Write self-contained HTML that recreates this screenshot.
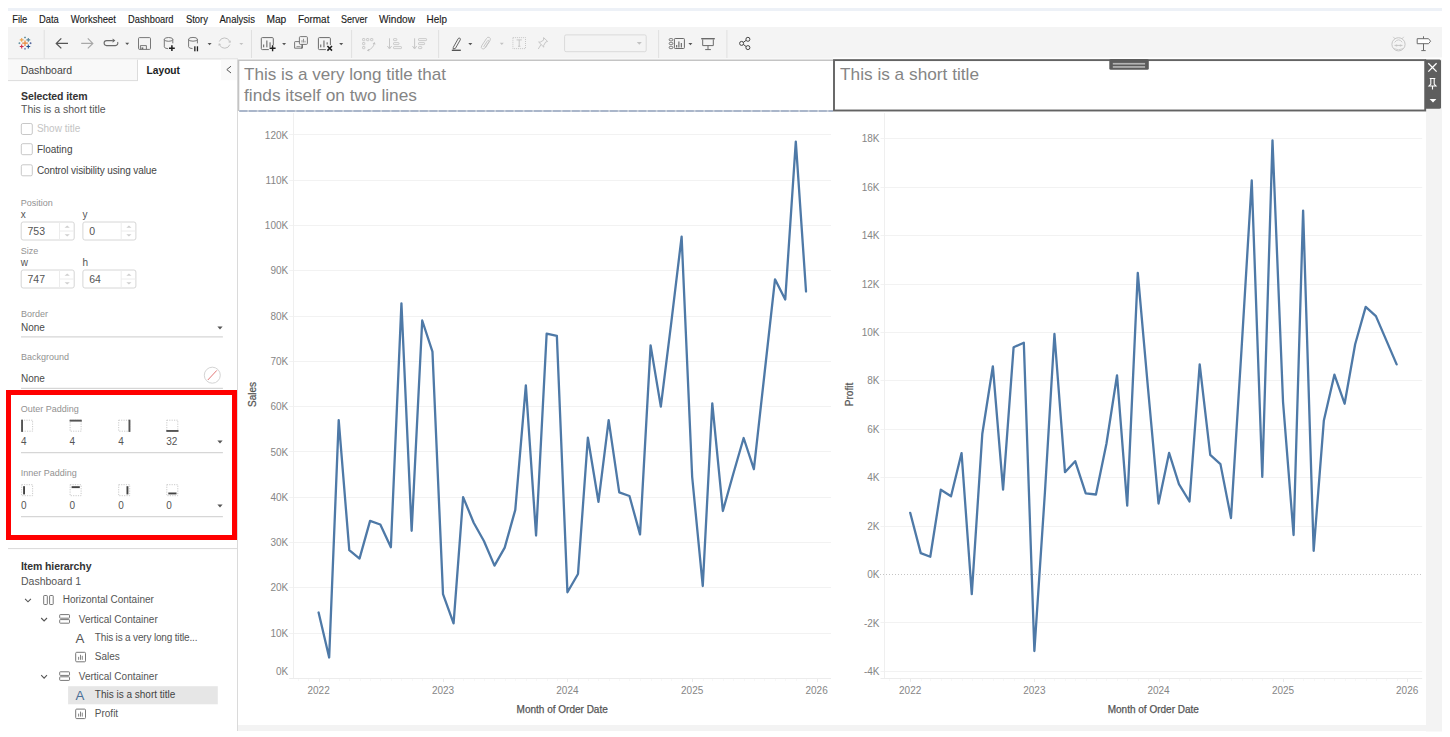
<!DOCTYPE html>
<html><head><meta charset="utf-8"><style>
html,body{margin:0;padding:0;background:#fff;overflow:hidden}
svg{display:block;font-family:"Liberation Sans",sans-serif}
</style></head><body>
<svg width="1450" height="737" viewBox="0 0 1450 737">
<rect x="0" y="0" width="1450" height="737" fill="#ffffff" />
<rect x="8" y="8" width="1434" height="3" fill="#edf1f7" />
<rect x="8" y="27" width="1434" height="31.2" fill="#f4f4f4" />
<rect x="8" y="58.2" width="230" height="1.5" fill="#e0e0e0" />
<rect x="238" y="58.2" width="595" height="1.3" fill="#f7f7f7" />
<text x="12.200000000000001" y="23.2" font-size="10.2" fill="#1a1a1a" font-weight="normal" text-anchor="start" textLength="15.1" lengthAdjust="spacingAndGlyphs" stroke="#1a1a1a" stroke-width="0.12">File</text>
<text x="39.0" y="23.2" font-size="10.2" fill="#1a1a1a" font-weight="normal" text-anchor="start" textLength="19.8" lengthAdjust="spacingAndGlyphs" stroke="#1a1a1a" stroke-width="0.12">Data</text>
<text x="70.8" y="23.2" font-size="10.2" fill="#1a1a1a" font-weight="normal" text-anchor="start" textLength="45.1" lengthAdjust="spacingAndGlyphs" stroke="#1a1a1a" stroke-width="0.12">Worksheet</text>
<text x="128.10000000000002" y="23.2" font-size="10.2" fill="#1a1a1a" font-weight="normal" text-anchor="start" textLength="45.4" lengthAdjust="spacingAndGlyphs" stroke="#1a1a1a" stroke-width="0.12">Dashboard</text>
<text x="185.9" y="23.2" font-size="10.2" fill="#1a1a1a" font-weight="normal" text-anchor="start" textLength="22.1" lengthAdjust="spacingAndGlyphs" stroke="#1a1a1a" stroke-width="0.12">Story</text>
<text x="219.5" y="23.2" font-size="10.2" fill="#1a1a1a" font-weight="normal" text-anchor="start" textLength="35.4" lengthAdjust="spacingAndGlyphs" stroke="#1a1a1a" stroke-width="0.12">Analysis</text>
<text x="266.40000000000003" y="23.2" font-size="10.2" fill="#1a1a1a" font-weight="normal" text-anchor="start" textLength="19.9" lengthAdjust="spacingAndGlyphs" stroke="#1a1a1a" stroke-width="0.12">Map</text>
<text x="297.90000000000003" y="23.2" font-size="10.2" fill="#1a1a1a" font-weight="normal" text-anchor="start" textLength="31.5" lengthAdjust="spacingAndGlyphs" stroke="#1a1a1a" stroke-width="0.12">Format</text>
<text x="340.90000000000003" y="23.2" font-size="10.2" fill="#1a1a1a" font-weight="normal" text-anchor="start" textLength="26.5" lengthAdjust="spacingAndGlyphs" stroke="#1a1a1a" stroke-width="0.12">Server</text>
<text x="379.0" y="23.2" font-size="10.2" fill="#1a1a1a" font-weight="normal" text-anchor="start" textLength="36.0" lengthAdjust="spacingAndGlyphs" stroke="#1a1a1a" stroke-width="0.12">Window</text>
<text x="426.5" y="23.2" font-size="10.2" fill="#1a1a1a" font-weight="normal" text-anchor="start" textLength="20.4" lengthAdjust="spacingAndGlyphs" stroke="#1a1a1a" stroke-width="0.12">Help</text>
<rect x="8" y="59.7" width="229" height="671.3" fill="#ffffff" />
<rect x="8" y="59.7" width="130" height="20.5" fill="#f9f9f9" />
<line x1="8" y1="80.6" x2="138" y2="80.6" stroke="#dcdcdc" stroke-width="1" />
<line x1="137.5" y1="59.7" x2="137.5" y2="81" stroke="#dcdcdc" stroke-width="1" />
<rect x="221" y="59.7" width="16" height="20.5" fill="#f9f9f9" />
<text x="20.7" y="74" font-size="10.5" fill="#444" font-weight="normal" text-anchor="start" >Dashboard</text>
<text x="146.6" y="74" font-size="10.2" fill="#222" font-weight="bold" text-anchor="start" >Layout</text>
<path d="M231 66.2 L226.8 69.6 L231 73" fill="none" stroke="#555" stroke-width="1"/>
<line x1="237.5" y1="59.5" x2="237.5" y2="731" stroke="#dadada" stroke-width="1" />
<text x="21" y="99.8" font-size="10.5" fill="#333" font-weight="bold" text-anchor="start" letter-spacing="-0.1">Selected item</text>
<text x="21" y="113.1" font-size="10.5" fill="#555" font-weight="normal" text-anchor="start" >This is a short title</text>
<rect x="21.3" y="123.5" width="11" height="11" rx="1.5" fill="#fff" stroke="#c8c8c8" stroke-width="1"/>
<text x="36.9" y="132" font-size="10" fill="#c4c4c4" font-weight="normal" text-anchor="start" >Show title</text>
<rect x="21.3" y="143.7" width="11" height="11" rx="1.5" fill="#fff" stroke="#c8c8c8" stroke-width="1"/>
<text x="36.9" y="152.9" font-size="10" fill="#444" font-weight="normal" text-anchor="start" >Floating</text>
<rect x="21.3" y="164.8" width="11" height="11" rx="1.5" fill="#fff" stroke="#c8c8c8" stroke-width="1"/>
<text x="36.9" y="173.7" font-size="10" fill="#444" font-weight="normal" text-anchor="start" letter-spacing="-0.1">Control visibility using value</text>
<text x="20.7" y="205.9" font-size="9" fill="#929292" font-weight="normal" text-anchor="start" >Position</text>
<text x="20.7" y="218" font-size="10" fill="#555" font-weight="normal" text-anchor="start" >x</text>
<text x="82.4" y="218" font-size="10" fill="#555" font-weight="normal" text-anchor="start" >y</text>
<rect x="21.2" y="222.0" width="53" height="18" rx="2" fill="#fff" stroke="#d6d6d6"/>
<line x1="59.5" y1="222.5" x2="59.5" y2="239.5" stroke="#ececec" stroke-width="1" />
<line x1="59.5" y1="231.0" x2="73.7" y2="231.0" stroke="#ececec" stroke-width="1" />
<path d="M64.60000000000001 227.7 L67.2 225.4 L69.8 227.7 Z" fill="#cfcfcf"/>
<path d="M64.60000000000001 234.3 L67.2 236.6 L69.8 234.3 Z" fill="#cfcfcf"/>
<text x="27.5" y="234.8" font-size="10.5" fill="#555" font-weight="normal" text-anchor="start" >753</text>
<rect x="82.9" y="222.0" width="53" height="18" rx="2" fill="#fff" stroke="#d6d6d6"/>
<line x1="121.2" y1="222.5" x2="121.2" y2="239.5" stroke="#ececec" stroke-width="1" />
<line x1="121.2" y1="231.0" x2="135.4" y2="231.0" stroke="#ececec" stroke-width="1" />
<path d="M126.30000000000001 227.7 L128.9 225.4 L131.5 227.7 Z" fill="#cfcfcf"/>
<path d="M126.30000000000001 234.3 L128.9 236.6 L131.5 234.3 Z" fill="#cfcfcf"/>
<text x="89.2" y="234.8" font-size="10.5" fill="#555" font-weight="normal" text-anchor="start" >0</text>
<text x="20.7" y="254.3" font-size="9" fill="#929292" font-weight="normal" text-anchor="start" >Size</text>
<text x="20.7" y="265.8" font-size="10" fill="#555" font-weight="normal" text-anchor="start" >w</text>
<text x="82.4" y="265.8" font-size="10" fill="#555" font-weight="normal" text-anchor="start" >h</text>
<rect x="21.2" y="270.0" width="53" height="18" rx="2" fill="#fff" stroke="#d6d6d6"/>
<line x1="59.5" y1="270.5" x2="59.5" y2="287.5" stroke="#ececec" stroke-width="1" />
<line x1="59.5" y1="279.0" x2="73.7" y2="279.0" stroke="#ececec" stroke-width="1" />
<path d="M64.60000000000001 275.7 L67.2 273.4 L69.8 275.7 Z" fill="#cfcfcf"/>
<path d="M64.60000000000001 282.3 L67.2 284.6 L69.8 282.3 Z" fill="#cfcfcf"/>
<text x="27.5" y="282.8" font-size="10.5" fill="#555" font-weight="normal" text-anchor="start" >747</text>
<rect x="82.9" y="270.0" width="53" height="18" rx="2" fill="#fff" stroke="#d6d6d6"/>
<line x1="121.2" y1="270.5" x2="121.2" y2="287.5" stroke="#ececec" stroke-width="1" />
<line x1="121.2" y1="279.0" x2="135.4" y2="279.0" stroke="#ececec" stroke-width="1" />
<path d="M126.30000000000001 275.7 L128.9 273.4 L131.5 275.7 Z" fill="#cfcfcf"/>
<path d="M126.30000000000001 282.3 L128.9 284.6 L131.5 282.3 Z" fill="#cfcfcf"/>
<text x="89.2" y="282.8" font-size="10.5" fill="#555" font-weight="normal" text-anchor="start" >64</text>
<text x="21" y="316.8" font-size="9" fill="#929292" font-weight="normal" text-anchor="start" >Border</text>
<text x="21" y="331.2" font-size="10" fill="#4a4a4a" font-weight="normal" text-anchor="start" >None</text>
<path d="M217.4 326.4 L222.6 326.4 L220 329.6 Z" fill="#555"/>
<line x1="21" y1="336.9" x2="222.9" y2="336.9" stroke="#d6d6d6" stroke-width="1.3" />
<text x="21" y="360.2" font-size="9" fill="#929292" font-weight="normal" text-anchor="start" >Background</text>
<text x="21" y="382" font-size="10" fill="#4a4a4a" font-weight="normal" text-anchor="start" >None</text>
<circle cx="212.3" cy="375.2" r="8" fill="#fff" stroke="#d4d4d4" stroke-width="1"/>
<line x1="207.8" y1="380" x2="216.8" y2="370.4" stroke="#e27777" stroke-width="1" />
<line x1="21" y1="388.4" x2="222.9" y2="388.4" stroke="#d6d6d6" stroke-width="1.3" />
<text x="20.8" y="411.8" font-size="9" fill="#929292" font-weight="normal" text-anchor="start" >Outer Padding</text>
<rect x="21.6" y="420.2" width="11" height="11" fill="none" stroke="#bdbdbd" stroke-width="0.8" stroke-dasharray="1.2 1.2"/>
<rect x="21.1" y="419.7" width="1.9" height="12.2" fill="#555" />
<text x="21.1" y="445" font-size="10" fill="#555" font-weight="normal" text-anchor="start" >4</text>
<rect x="70.1" y="420.2" width="11" height="11" fill="none" stroke="#bdbdbd" stroke-width="0.8" stroke-dasharray="1.2 1.2"/>
<rect x="69.6" y="419.7" width="12.2" height="1.9" fill="#555" />
<text x="69.6" y="445" font-size="10" fill="#555" font-weight="normal" text-anchor="start" >4</text>
<rect x="118.7" y="420.2" width="11" height="11" fill="none" stroke="#bdbdbd" stroke-width="0.8" stroke-dasharray="1.2 1.2"/>
<rect x="128.5" y="419.7" width="1.9" height="12.2" fill="#555" />
<text x="118.2" y="445" font-size="10" fill="#555" font-weight="normal" text-anchor="start" >4</text>
<rect x="166.8" y="420.2" width="11" height="11" fill="none" stroke="#bdbdbd" stroke-width="0.8" stroke-dasharray="1.2 1.2"/>
<rect x="166.3" y="430.0" width="12.2" height="1.9" fill="#555" />
<text x="166.3" y="445" font-size="10" fill="#555" font-weight="normal" text-anchor="start" >32</text>
<path d="M217.4 440.4 L222.6 440.4 L220 443.6 Z" fill="#555"/>
<line x1="21" y1="452.6" x2="222.9" y2="452.6" stroke="#d6d6d6" stroke-width="1.3" />
<text x="20.8" y="475.6" font-size="9" fill="#929292" font-weight="normal" text-anchor="start" >Inner Padding</text>
<rect x="21.6" y="484.7" width="11" height="11" fill="none" stroke="#bdbdbd" stroke-width="0.8" stroke-dasharray="1.2 1.2"/>
<rect x="23.1" y="486.2" width="1.9" height="8.2" fill="#444" />
<text x="21.1" y="509.2" font-size="10" fill="#555" font-weight="normal" text-anchor="start" >0</text>
<rect x="70.1" y="484.7" width="11" height="11" fill="none" stroke="#bdbdbd" stroke-width="0.8" stroke-dasharray="1.2 1.2"/>
<rect x="71.6" y="486.2" width="8.2" height="1.9" fill="#444" />
<text x="69.6" y="509.2" font-size="10" fill="#555" font-weight="normal" text-anchor="start" >0</text>
<rect x="118.7" y="484.7" width="11" height="11" fill="none" stroke="#bdbdbd" stroke-width="0.8" stroke-dasharray="1.2 1.2"/>
<rect x="126.5" y="486.2" width="1.9" height="8.2" fill="#444" />
<text x="118.2" y="509.2" font-size="10" fill="#555" font-weight="normal" text-anchor="start" >0</text>
<rect x="166.8" y="484.7" width="11" height="11" fill="none" stroke="#bdbdbd" stroke-width="0.8" stroke-dasharray="1.2 1.2"/>
<rect x="168.3" y="492.5" width="8.2" height="1.9" fill="#444" />
<text x="166.3" y="509.2" font-size="10" fill="#555" font-weight="normal" text-anchor="start" >0</text>
<path d="M217.4 504.4 L222.6 504.4 L220 507.6 Z" fill="#555"/>
<line x1="21" y1="516.6" x2="222.9" y2="516.6" stroke="#d6d6d6" stroke-width="1.3" />
<rect x="8.5" y="392.5" width="226" height="145" fill="none" stroke="#ff0000" stroke-width="5"/>
<line x1="8" y1="548.6" x2="237" y2="548.6" stroke="#d9d9d9" stroke-width="1" />
<text x="21" y="570.2" font-size="10.5" fill="#333" font-weight="bold" text-anchor="start" letter-spacing="-0.1">Item hierarchy</text>
<text x="21" y="585.2" font-size="10.5" fill="#555" font-weight="normal" text-anchor="start" >Dashboard 1</text>
<path d="M25.1 598.9 L28.0 601.8 L30.900000000000002 598.9" fill="none" stroke="#555" stroke-width="1.1"/>
<rect x="43.7" y="595.5" width="3.6" height="9" rx="0.6" fill="none" stroke="#777" stroke-width="1"/>
<rect x="49.6" y="595.5" width="3.6" height="9" rx="0.6" fill="none" stroke="#777" stroke-width="1"/>
<text x="62.7" y="603.4" font-size="10" fill="#555" font-weight="normal" text-anchor="start" >Horizontal Container</text>
<path d="M41.2 618 L44.1 620.9 L47.0 618" fill="none" stroke="#555" stroke-width="1.1"/>
<rect x="59.7" y="614.6" width="9.8" height="3.6" rx="0.6" fill="none" stroke="#777" stroke-width="1"/>
<rect x="59.7" y="619.6" width="9.8" height="3.6" rx="0.6" fill="none" stroke="#777" stroke-width="1"/>
<text x="78.8" y="622.6" font-size="10" fill="#555" font-weight="normal" text-anchor="start" >Vertical Container</text>
<text x="75.6" y="642.9" font-size="13.3" fill="#555" >A</text>
<text x="94.8" y="640.9" font-size="10" fill="#555" font-weight="normal" text-anchor="start" letter-spacing="-0.17">This is a very long title...</text>
<rect x="75.7" y="652.3" width="9.8" height="9.5" rx="1" fill="none" stroke="#777" stroke-width="1"/>
<rect x="78.2" y="656.8" width="0.9" height="3" fill="#777" />
<rect x="80.0" y="654.8" width="0.9" height="5" fill="#777" />
<rect x="81.8" y="655.8" width="0.9" height="4" fill="#777" />
<text x="94.8" y="660.2" font-size="10" fill="#555" font-weight="normal" text-anchor="start" >Sales</text>
<path d="M41.2 675.2 L44.1 678.1 L47.0 675.2" fill="none" stroke="#555" stroke-width="1.1"/>
<rect x="59.7" y="671.8" width="9.8" height="3.6" rx="0.6" fill="none" stroke="#777" stroke-width="1"/>
<rect x="59.7" y="676.8" width="9.8" height="3.6" rx="0.6" fill="none" stroke="#777" stroke-width="1"/>
<text x="78.8" y="679.8" font-size="10" fill="#555" font-weight="normal" text-anchor="start" >Vertical Container</text>
<rect x="68.1" y="686.2" width="149.7" height="18.1" fill="#e6e6e6" />
<text x="75.6" y="699.8" font-size="13.3" fill="#4a6f96" >A</text>
<text x="94.8" y="698.1" font-size="10" fill="#444" font-weight="normal" text-anchor="start" >This is a short title</text>
<rect x="75.7" y="709.1" width="9.8" height="9.5" rx="1" fill="none" stroke="#777" stroke-width="1"/>
<rect x="78.2" y="713.6" width="0.9" height="3" fill="#777" />
<rect x="80.0" y="711.6" width="0.9" height="5" fill="#777" />
<rect x="81.8" y="712.6" width="0.9" height="4" fill="#777" />
<text x="94.8" y="717.1" font-size="10" fill="#555" font-weight="normal" text-anchor="start" >Profit</text>
<rect x="238" y="59.5" width="1204" height="671.5" fill="#ffffff" />
<rect x="833" y="57.5" width="609" height="2" fill="#ffffff" />
<rect x="1426" y="59.5" width="16" height="672" fill="#f3f3f3" />
<rect x="238" y="725" width="1204" height="6" fill="#f3f3f3" />
<path d="M238.6 111 L238.6 60.3 L833 60.3" fill="none" stroke="#c4c4c4" stroke-width="1.4"/>
<line x1="239" y1="111" x2="833" y2="111" stroke="#bcc4d0" stroke-width="1.6"/>
<line x1="239.5" y1="111" x2="833" y2="111" stroke="#9eadc4" stroke-width="1.6" stroke-dasharray="7.8 1.7"/>
<text x="244" y="80.2" font-size="16.2" fill="#858585" font-weight="normal" text-anchor="start" textLength="202" lengthAdjust="spacingAndGlyphs">This is a very long title that</text>
<text x="244" y="100.9" font-size="16.2" fill="#858585" font-weight="normal" text-anchor="start" textLength="173" lengthAdjust="spacingAndGlyphs">finds itself on two lines</text>
<rect x="834" y="60.1" width="591.2" height="50.4" fill="#fff" stroke="#636363" stroke-width="1.9"/>
<text x="840" y="80.2" font-size="16.2" fill="#858585" font-weight="normal" text-anchor="start" textLength="139" lengthAdjust="spacingAndGlyphs">This is a short title</text>
<rect x="1109.3" y="59" width="39.5" height="10.7" rx="1.5" fill="#5c5c5c"/>
<rect x="1112.8" y="62.9" width="32.3" height="1.7" fill="#b4b4b4" />
<rect x="1112.8" y="66.1" width="32.3" height="1.7" fill="#b4b4b4" />
<path d="M1425.2 59.5 H1439.5 Q1441 59.5 1441 61 V107.2 Q1441 108.7 1439.5 108.7 H1425.2 Z" fill="#5e5e5e"/>
<path d="M1428.3 63.3 L1436.6 71.6 M1436.6 63.3 L1428.3 71.6" stroke="#fff" stroke-width="1.3"/>
<path d="M1429.7 78.5 H1435.3 M1430.8 78.5 V84 L1429 86 H1436 L1434.2 84 V78.5 M1432.5 86 V89.6" fill="none" stroke="#fff" stroke-width="1.1"/>
<path d="M1429.6 99 H1436.4 L1433 102.4 Z" fill="#fff"/>
<text x="288.2" y="674.9" font-size="10" fill="#868686" font-weight="normal" text-anchor="end" >0K</text>
<line x1="289.2" y1="633.5" x2="831" y2="633.5" stroke="#f2f2f2" stroke-width="1" />
<text x="288.2" y="636.71" font-size="10" fill="#868686" font-weight="normal" text-anchor="end" >10K</text>
<line x1="289.2" y1="587.5" x2="831" y2="587.5" stroke="#f2f2f2" stroke-width="1" />
<text x="288.2" y="591.42" font-size="10" fill="#868686" font-weight="normal" text-anchor="end" >20K</text>
<line x1="289.2" y1="542.5" x2="831" y2="542.5" stroke="#f2f2f2" stroke-width="1" />
<text x="288.2" y="546.13" font-size="10" fill="#868686" font-weight="normal" text-anchor="end" >30K</text>
<line x1="289.2" y1="497.5" x2="831" y2="497.5" stroke="#f2f2f2" stroke-width="1" />
<text x="288.2" y="500.84000000000003" font-size="10" fill="#868686" font-weight="normal" text-anchor="end" >40K</text>
<line x1="289.2" y1="451.5" x2="831" y2="451.5" stroke="#f2f2f2" stroke-width="1" />
<text x="288.2" y="455.55" font-size="10" fill="#868686" font-weight="normal" text-anchor="end" >50K</text>
<line x1="289.2" y1="406.5" x2="831" y2="406.5" stroke="#f2f2f2" stroke-width="1" />
<text x="288.2" y="410.26" font-size="10" fill="#868686" font-weight="normal" text-anchor="end" >60K</text>
<line x1="289.2" y1="361.5" x2="831" y2="361.5" stroke="#f2f2f2" stroke-width="1" />
<text x="288.2" y="364.97" font-size="10" fill="#868686" font-weight="normal" text-anchor="end" >70K</text>
<line x1="289.2" y1="316.5" x2="831" y2="316.5" stroke="#f2f2f2" stroke-width="1" />
<text x="288.2" y="319.68" font-size="10" fill="#868686" font-weight="normal" text-anchor="end" >80K</text>
<line x1="289.2" y1="270.5" x2="831" y2="270.5" stroke="#f2f2f2" stroke-width="1" />
<text x="288.2" y="274.39" font-size="10" fill="#868686" font-weight="normal" text-anchor="end" >90K</text>
<line x1="289.2" y1="225.5" x2="831" y2="225.5" stroke="#f2f2f2" stroke-width="1" />
<text x="288.2" y="229.1" font-size="10" fill="#868686" font-weight="normal" text-anchor="end" >100K</text>
<line x1="289.2" y1="180.5" x2="831" y2="180.5" stroke="#f2f2f2" stroke-width="1" />
<text x="288.2" y="183.80999999999997" font-size="10" fill="#868686" font-weight="normal" text-anchor="end" >110K</text>
<line x1="289.2" y1="134.5" x2="831" y2="134.5" stroke="#f2f2f2" stroke-width="1" />
<text x="288.2" y="138.51999999999995" font-size="10" fill="#868686" font-weight="normal" text-anchor="end" >120K</text>
<line x1="293.5" y1="113" x2="293.5" y2="678.5" stroke="#efefef" stroke-width="1" />
<line x1="289.2" y1="678.5" x2="831" y2="678.5" stroke="#ececec" stroke-width="1" />
<line x1="298.5" y1="679" x2="298.5" y2="681" stroke="#f8f8f8" stroke-width="1" />
<line x1="308.5" y1="679" x2="308.5" y2="681" stroke="#f8f8f8" stroke-width="1" />
<line x1="319.5" y1="679" x2="319.5" y2="682" stroke="#ebebeb" stroke-width="1" />
<line x1="329.5" y1="679" x2="329.5" y2="681" stroke="#f8f8f8" stroke-width="1" />
<line x1="339.5" y1="679" x2="339.5" y2="681" stroke="#f8f8f8" stroke-width="1" />
<line x1="349.5" y1="679" x2="349.5" y2="681" stroke="#f8f8f8" stroke-width="1" />
<line x1="360.5" y1="679" x2="360.5" y2="681" stroke="#f8f8f8" stroke-width="1" />
<line x1="370.5" y1="679" x2="370.5" y2="681" stroke="#f8f8f8" stroke-width="1" />
<line x1="380.5" y1="679" x2="380.5" y2="681" stroke="#f8f8f8" stroke-width="1" />
<line x1="391.5" y1="679" x2="391.5" y2="681" stroke="#f8f8f8" stroke-width="1" />
<line x1="401.5" y1="679" x2="401.5" y2="681" stroke="#f8f8f8" stroke-width="1" />
<line x1="412.5" y1="679" x2="412.5" y2="681" stroke="#f8f8f8" stroke-width="1" />
<line x1="422.5" y1="679" x2="422.5" y2="681" stroke="#f8f8f8" stroke-width="1" />
<line x1="432.5" y1="679" x2="432.5" y2="681" stroke="#f8f8f8" stroke-width="1" />
<line x1="443.5" y1="679" x2="443.5" y2="682" stroke="#ebebeb" stroke-width="1" />
<line x1="454.5" y1="679" x2="454.5" y2="681" stroke="#f8f8f8" stroke-width="1" />
<line x1="463.5" y1="679" x2="463.5" y2="681" stroke="#f8f8f8" stroke-width="1" />
<line x1="474.5" y1="679" x2="474.5" y2="681" stroke="#f8f8f8" stroke-width="1" />
<line x1="484.5" y1="679" x2="484.5" y2="681" stroke="#f8f8f8" stroke-width="1" />
<line x1="494.5" y1="679" x2="494.5" y2="681" stroke="#f8f8f8" stroke-width="1" />
<line x1="505.5" y1="679" x2="505.5" y2="681" stroke="#f8f8f8" stroke-width="1" />
<line x1="515.5" y1="679" x2="515.5" y2="681" stroke="#f8f8f8" stroke-width="1" />
<line x1="526.5" y1="679" x2="526.5" y2="681" stroke="#f8f8f8" stroke-width="1" />
<line x1="536.5" y1="679" x2="536.5" y2="681" stroke="#f8f8f8" stroke-width="1" />
<line x1="547.5" y1="679" x2="547.5" y2="681" stroke="#f8f8f8" stroke-width="1" />
<line x1="557.5" y1="679" x2="557.5" y2="681" stroke="#f8f8f8" stroke-width="1" />
<line x1="567.5" y1="679" x2="567.5" y2="682" stroke="#ebebeb" stroke-width="1" />
<line x1="578.5" y1="679" x2="578.5" y2="681" stroke="#f8f8f8" stroke-width="1" />
<line x1="588.5" y1="679" x2="588.5" y2="681" stroke="#f8f8f8" stroke-width="1" />
<line x1="598.5" y1="679" x2="598.5" y2="681" stroke="#f8f8f8" stroke-width="1" />
<line x1="609.5" y1="679" x2="609.5" y2="681" stroke="#f8f8f8" stroke-width="1" />
<line x1="619.5" y1="679" x2="619.5" y2="681" stroke="#f8f8f8" stroke-width="1" />
<line x1="629.5" y1="679" x2="629.5" y2="681" stroke="#f8f8f8" stroke-width="1" />
<line x1="640.5" y1="679" x2="640.5" y2="681" stroke="#f8f8f8" stroke-width="1" />
<line x1="651.5" y1="679" x2="651.5" y2="681" stroke="#f8f8f8" stroke-width="1" />
<line x1="661.5" y1="679" x2="661.5" y2="681" stroke="#f8f8f8" stroke-width="1" />
<line x1="671.5" y1="679" x2="671.5" y2="681" stroke="#f8f8f8" stroke-width="1" />
<line x1="682.5" y1="679" x2="682.5" y2="681" stroke="#f8f8f8" stroke-width="1" />
<line x1="692.5" y1="679" x2="692.5" y2="682" stroke="#ebebeb" stroke-width="1" />
<line x1="703.5" y1="679" x2="703.5" y2="681" stroke="#f8f8f8" stroke-width="1" />
<line x1="712.5" y1="679" x2="712.5" y2="681" stroke="#f8f8f8" stroke-width="1" />
<line x1="723.5" y1="679" x2="723.5" y2="681" stroke="#f8f8f8" stroke-width="1" />
<line x1="733.5" y1="679" x2="733.5" y2="681" stroke="#f8f8f8" stroke-width="1" />
<line x1="744.5" y1="679" x2="744.5" y2="681" stroke="#f8f8f8" stroke-width="1" />
<line x1="754.5" y1="679" x2="754.5" y2="681" stroke="#f8f8f8" stroke-width="1" />
<line x1="764.5" y1="679" x2="764.5" y2="681" stroke="#f8f8f8" stroke-width="1" />
<line x1="775.5" y1="679" x2="775.5" y2="681" stroke="#f8f8f8" stroke-width="1" />
<line x1="785.5" y1="679" x2="785.5" y2="681" stroke="#f8f8f8" stroke-width="1" />
<line x1="796.5" y1="679" x2="796.5" y2="681" stroke="#f8f8f8" stroke-width="1" />
<line x1="806.5" y1="679" x2="806.5" y2="681" stroke="#f8f8f8" stroke-width="1" />
<line x1="817.5" y1="679" x2="817.5" y2="682" stroke="#ebebeb" stroke-width="1" />
<text x="318.6" y="693.8" font-size="10" fill="#868686" font-weight="normal" text-anchor="middle" >2022</text>
<text x="443.01390000000004" y="693.8" font-size="10" fill="#868686" font-weight="normal" text-anchor="middle" >2023</text>
<text x="567.4278" y="693.8" font-size="10" fill="#868686" font-weight="normal" text-anchor="middle" >2024</text>
<text x="692.18256" y="693.8" font-size="10" fill="#868686" font-weight="normal" text-anchor="middle" >2025</text>
<text x="816.59646" y="693.8" font-size="10" fill="#868686" font-weight="normal" text-anchor="middle" >2026</text>
<text x="562.2" y="712.9" font-size="10" fill="#555555" font-weight="normal" text-anchor="middle" stroke="#555" stroke-width="0.25">Month of Order Date</text>
<text x="256.2" y="394.5" font-size="10" fill="#555555" text-anchor="middle" stroke="#555" stroke-width="0.25" transform="rotate(-90 256.2 394.5)">Sales</text>
<polyline points="318.60,612.50 329.17,657.50 338.71,420.10 349.28,550.20 359.50,558.60 370.07,520.90 380.30,524.50 390.86,547.30 401.43,303.30 411.65,530.80 422.22,320.50 432.45,351.60 443.01,594.10 453.58,623.40 463.12,497.10 473.69,522.70 483.92,541.00 494.48,565.60 504.71,547.60 515.28,509.90 525.84,385.30 536.07,535.50 546.64,333.70 556.86,335.90 567.43,592.30 577.99,574.00 587.88,437.70 598.45,501.80 608.67,420.10 619.24,492.30 629.46,496.00 640.03,534.40 650.60,345.40 660.82,406.60 671.39,321.60 681.62,236.60 692.18,477.00 702.75,586.00 712.29,403.40 722.86,511.00 733.09,474.50 743.65,438.00 753.88,469.20 764.44,374.25 775.01,279.30 785.24,299.50 795.80,141.70 806.03,291.50" fill="none" stroke="#4e79a7" stroke-width="2.3" stroke-linejoin="round" stroke-linecap="round"/>
<line x1="880.5" y1="671.5" x2="1422.2" y2="671.5" stroke="#f2f2f2" stroke-width="1" />
<text x="879.5" y="674.92" font-size="10" fill="#868686" font-weight="normal" text-anchor="end" >-4K</text>
<line x1="880.5" y1="622.5" x2="1422.2" y2="622.5" stroke="#f2f2f2" stroke-width="1" />
<text x="879.5" y="626.51" font-size="10" fill="#868686" font-weight="normal" text-anchor="end" >-2K</text>
<text x="879.5" y="578.1" font-size="10" fill="#868686" font-weight="normal" text-anchor="end" >0K</text>
<line x1="880.5" y1="526.5" x2="1422.2" y2="526.5" stroke="#f2f2f2" stroke-width="1" />
<text x="879.5" y="529.69" font-size="10" fill="#868686" font-weight="normal" text-anchor="end" >2K</text>
<line x1="880.5" y1="477.5" x2="1422.2" y2="477.5" stroke="#f2f2f2" stroke-width="1" />
<text x="879.5" y="481.28000000000003" font-size="10" fill="#868686" font-weight="normal" text-anchor="end" >4K</text>
<line x1="880.5" y1="429.5" x2="1422.2" y2="429.5" stroke="#f2f2f2" stroke-width="1" />
<text x="879.5" y="432.87" font-size="10" fill="#868686" font-weight="normal" text-anchor="end" >6K</text>
<line x1="880.5" y1="380.5" x2="1422.2" y2="380.5" stroke="#f2f2f2" stroke-width="1" />
<text x="879.5" y="384.46000000000004" font-size="10" fill="#868686" font-weight="normal" text-anchor="end" >8K</text>
<line x1="880.5" y1="332.5" x2="1422.2" y2="332.5" stroke="#f2f2f2" stroke-width="1" />
<text x="879.5" y="336.05000000000007" font-size="10" fill="#868686" font-weight="normal" text-anchor="end" >10K</text>
<line x1="880.5" y1="284.5" x2="1422.2" y2="284.5" stroke="#f2f2f2" stroke-width="1" />
<text x="879.5" y="287.64000000000004" font-size="10" fill="#868686" font-weight="normal" text-anchor="end" >12K</text>
<line x1="880.5" y1="235.5" x2="1422.2" y2="235.5" stroke="#f2f2f2" stroke-width="1" />
<text x="879.5" y="239.23" font-size="10" fill="#868686" font-weight="normal" text-anchor="end" >14K</text>
<line x1="880.5" y1="187.5" x2="1422.2" y2="187.5" stroke="#f2f2f2" stroke-width="1" />
<text x="879.5" y="190.82000000000002" font-size="10" fill="#868686" font-weight="normal" text-anchor="end" >16K</text>
<line x1="880.5" y1="138.5" x2="1422.2" y2="138.5" stroke="#f2f2f2" stroke-width="1" />
<text x="879.5" y="142.41000000000005" font-size="10" fill="#868686" font-weight="normal" text-anchor="end" >18K</text>
<line x1="880" y1="574.5" x2="1422" y2="574.5" stroke="#c4c4c4" stroke-width="1" stroke-dasharray="1 2"/>
<line x1="884.5" y1="113" x2="884.5" y2="678.5" stroke="#efefef" stroke-width="1" />
<line x1="880.5" y1="678.5" x2="1422.2" y2="678.5" stroke="#ececec" stroke-width="1" />
<line x1="889.5" y1="679" x2="889.5" y2="681" stroke="#f8f8f8" stroke-width="1" />
<line x1="900.5" y1="679" x2="900.5" y2="681" stroke="#f8f8f8" stroke-width="1" />
<line x1="910.5" y1="679" x2="910.5" y2="682" stroke="#ebebeb" stroke-width="1" />
<line x1="921.5" y1="679" x2="921.5" y2="681" stroke="#f8f8f8" stroke-width="1" />
<line x1="930.5" y1="679" x2="930.5" y2="681" stroke="#f8f8f8" stroke-width="1" />
<line x1="941.5" y1="679" x2="941.5" y2="681" stroke="#f8f8f8" stroke-width="1" />
<line x1="951.5" y1="679" x2="951.5" y2="681" stroke="#f8f8f8" stroke-width="1" />
<line x1="962.5" y1="679" x2="962.5" y2="681" stroke="#f8f8f8" stroke-width="1" />
<line x1="972.5" y1="679" x2="972.5" y2="681" stroke="#f8f8f8" stroke-width="1" />
<line x1="982.5" y1="679" x2="982.5" y2="681" stroke="#f8f8f8" stroke-width="1" />
<line x1="993.5" y1="679" x2="993.5" y2="681" stroke="#f8f8f8" stroke-width="1" />
<line x1="1003.5" y1="679" x2="1003.5" y2="681" stroke="#f8f8f8" stroke-width="1" />
<line x1="1014.5" y1="679" x2="1014.5" y2="681" stroke="#f8f8f8" stroke-width="1" />
<line x1="1024.5" y1="679" x2="1024.5" y2="681" stroke="#f8f8f8" stroke-width="1" />
<line x1="1034.5" y1="679" x2="1034.5" y2="682" stroke="#ebebeb" stroke-width="1" />
<line x1="1045.5" y1="679" x2="1045.5" y2="681" stroke="#f8f8f8" stroke-width="1" />
<line x1="1054.5" y1="679" x2="1054.5" y2="681" stroke="#f8f8f8" stroke-width="1" />
<line x1="1065.5" y1="679" x2="1065.5" y2="681" stroke="#f8f8f8" stroke-width="1" />
<line x1="1075.5" y1="679" x2="1075.5" y2="681" stroke="#f8f8f8" stroke-width="1" />
<line x1="1086.5" y1="679" x2="1086.5" y2="681" stroke="#f8f8f8" stroke-width="1" />
<line x1="1096.5" y1="679" x2="1096.5" y2="681" stroke="#f8f8f8" stroke-width="1" />
<line x1="1106.5" y1="679" x2="1106.5" y2="681" stroke="#f8f8f8" stroke-width="1" />
<line x1="1117.5" y1="679" x2="1117.5" y2="681" stroke="#f8f8f8" stroke-width="1" />
<line x1="1127.5" y1="679" x2="1127.5" y2="681" stroke="#f8f8f8" stroke-width="1" />
<line x1="1138.5" y1="679" x2="1138.5" y2="681" stroke="#f8f8f8" stroke-width="1" />
<line x1="1148.5" y1="679" x2="1148.5" y2="681" stroke="#f8f8f8" stroke-width="1" />
<line x1="1159.5" y1="679" x2="1159.5" y2="682" stroke="#ebebeb" stroke-width="1" />
<line x1="1169.5" y1="679" x2="1169.5" y2="681" stroke="#f8f8f8" stroke-width="1" />
<line x1="1179.5" y1="679" x2="1179.5" y2="681" stroke="#f8f8f8" stroke-width="1" />
<line x1="1189.5" y1="679" x2="1189.5" y2="681" stroke="#f8f8f8" stroke-width="1" />
<line x1="1200.5" y1="679" x2="1200.5" y2="681" stroke="#f8f8f8" stroke-width="1" />
<line x1="1210.5" y1="679" x2="1210.5" y2="681" stroke="#f8f8f8" stroke-width="1" />
<line x1="1220.5" y1="679" x2="1220.5" y2="681" stroke="#f8f8f8" stroke-width="1" />
<line x1="1231.5" y1="679" x2="1231.5" y2="681" stroke="#f8f8f8" stroke-width="1" />
<line x1="1242.5" y1="679" x2="1242.5" y2="681" stroke="#f8f8f8" stroke-width="1" />
<line x1="1252.5" y1="679" x2="1252.5" y2="681" stroke="#f8f8f8" stroke-width="1" />
<line x1="1262.5" y1="679" x2="1262.5" y2="681" stroke="#f8f8f8" stroke-width="1" />
<line x1="1272.5" y1="679" x2="1272.5" y2="681" stroke="#f8f8f8" stroke-width="1" />
<line x1="1283.5" y1="679" x2="1283.5" y2="682" stroke="#ebebeb" stroke-width="1" />
<line x1="1294.5" y1="679" x2="1294.5" y2="681" stroke="#f8f8f8" stroke-width="1" />
<line x1="1303.5" y1="679" x2="1303.5" y2="681" stroke="#f8f8f8" stroke-width="1" />
<line x1="1314.5" y1="679" x2="1314.5" y2="681" stroke="#f8f8f8" stroke-width="1" />
<line x1="1324.5" y1="679" x2="1324.5" y2="681" stroke="#f8f8f8" stroke-width="1" />
<line x1="1334.5" y1="679" x2="1334.5" y2="681" stroke="#f8f8f8" stroke-width="1" />
<line x1="1345.5" y1="679" x2="1345.5" y2="681" stroke="#f8f8f8" stroke-width="1" />
<line x1="1355.5" y1="679" x2="1355.5" y2="681" stroke="#f8f8f8" stroke-width="1" />
<line x1="1366.5" y1="679" x2="1366.5" y2="681" stroke="#f8f8f8" stroke-width="1" />
<line x1="1376.5" y1="679" x2="1376.5" y2="681" stroke="#f8f8f8" stroke-width="1" />
<line x1="1386.5" y1="679" x2="1386.5" y2="681" stroke="#f8f8f8" stroke-width="1" />
<line x1="1397.5" y1="679" x2="1397.5" y2="681" stroke="#f8f8f8" stroke-width="1" />
<line x1="1407.5" y1="679" x2="1407.5" y2="682" stroke="#ebebeb" stroke-width="1" />
<text x="910.2" y="693.8" font-size="10" fill="#868686" font-weight="normal" text-anchor="middle" >2022</text>
<text x="1034.3657" y="693.8" font-size="10" fill="#868686" font-weight="normal" text-anchor="middle" >2023</text>
<text x="1158.5314" y="693.8" font-size="10" fill="#868686" font-weight="normal" text-anchor="middle" >2024</text>
<text x="1283.03728" y="693.8" font-size="10" fill="#868686" font-weight="normal" text-anchor="middle" >2025</text>
<text x="1407.20298" y="693.8" font-size="10" fill="#868686" font-weight="normal" text-anchor="middle" >2026</text>
<text x="1153.3" y="712.9" font-size="10" fill="#555555" font-weight="normal" text-anchor="middle" stroke="#555" stroke-width="0.25">Month of Order Date</text>
<text x="853" y="394.5" font-size="10" fill="#555555" text-anchor="middle" stroke="#555" stroke-width="0.25" transform="rotate(-90 853 394.5)">Profit</text>
<polyline points="910.20,512.80 920.75,553.10 930.27,556.80 940.82,489.70 951.02,496.30 961.57,453.10 971.77,594.10 982.32,433.70 992.86,366.30 1003.07,489.70 1013.61,347.20 1023.82,342.80 1034.37,651.00 1044.91,492.50 1054.44,334.00 1064.98,472.20 1075.19,461.20 1085.73,493.40 1095.94,494.50 1106.48,443.50 1117.03,375.30 1127.23,505.60 1137.78,272.90 1147.99,388.20 1158.53,503.50 1169.08,452.90 1178.94,484.20 1189.49,501.50 1199.69,364.40 1210.24,454.90 1220.44,464.10 1230.99,518.00 1241.54,349.25 1251.74,180.50 1262.29,476.90 1272.49,140.30 1283.04,402.00 1293.58,535.00 1303.11,210.60 1313.65,550.80 1323.86,420.40 1334.40,374.70 1344.61,403.70 1355.16,344.30 1365.70,306.90 1375.91,316.10 1386.45,340.60 1396.66,364.40" fill="none" stroke="#4e79a7" stroke-width="2.3" stroke-linejoin="round" stroke-linecap="round"/>
<path d="M22.2 43.2 H27.8 M25 40.400000000000006 V46.0" stroke="#e8853a" stroke-width="1.2" fill="none"/>
<path d="M19.8 39.9 H23.599999999999998 M21.7 38.0 V41.8" stroke="#eba44f" stroke-width="1.1" fill="none"/>
<path d="M26.400000000000002 39.9 H30.2 M28.3 38.0 V41.8" stroke="#5b879a" stroke-width="1.1" fill="none"/>
<path d="M19.8 46.5 H23.599999999999998 M21.7 44.6 V48.4" stroke="#d12d49" stroke-width="1.1" fill="none"/>
<path d="M26.400000000000002 46.5 H30.2 M28.3 44.6 V48.4" stroke="#1f4e8c" stroke-width="1.1" fill="none"/>
<path d="M24.1 37.5 H25.9 M25 36.6 V38.4" stroke="#5f8f9f" stroke-width="0.9" fill="none"/>
<path d="M24.1 48.8 H25.9 M25 47.9 V49.699999999999996" stroke="#7b7fb0" stroke-width="0.9" fill="none"/>
<path d="M18.5 43.2 H20.299999999999997 M19.4 42.300000000000004 V44.1" stroke="#5f8f9f" stroke-width="0.9" fill="none"/>
<path d="M29.700000000000003 43.2 H31.5 M30.6 42.300000000000004 V44.1" stroke="#4b5f9a" stroke-width="0.9" fill="none"/>
<rect x="43.7" y="30" width="1" height="28" fill="#e0e0e0"/>
<path d="M68 43.4 H56.3 M61.3 38.4 L56.3 43.4 L61.3 48.4" fill="none" stroke="#555" stroke-width="1.3"/>
<path d="M81.2 43.4 H92.8 M87.8 38.4 L92.8 43.4 L87.8 48.4" fill="none" stroke="#a8a8a8" stroke-width="1.2"/>
<path d="M112.8 40.6 H106.6 A2.5 2.5 0 0 0 106.6 45.6 H115.4 A2.5 2.5 0 0 0 117.6 42" fill="none" stroke="#6a6a6a" stroke-width="1.1"/>
<path d="M112.6 38.5 L115.4 40.6 L112.6 42.8 Z" fill="#6a6a6a"/>
<path d="M125.2 42.8 H129.2 L127.2 45.0 Z" fill="#555"/>
<rect x="138.5" y="37.6" width="12" height="11.8" rx="1" fill="none" stroke="#6a6a6a" stroke-width="0.9"/>
<path d="M140.4 49.4 V45.6 H146.4 V49.4" fill="none" stroke="#6a6a6a" stroke-width="0.9"/>
<rect x="141.5" y="47.4" width="1.8" height="1.8" fill="#6a6a6a"/>
<ellipse cx="168.55" cy="39.4" rx="4.25" ry="1.9" fill="none" stroke="#6a6a6a" stroke-width="0.9"/>
<path d="M164.3 39.4 V46.800000000000004 A4.25 1.9 0 0 0 168.125 48.7" fill="none" stroke="#6a6a6a" stroke-width="0.9"/>
<path d="M172.8 39.4 V43.3" fill="none" stroke="#6a6a6a" stroke-width="0.9"/>
<path d="M169.0 48.2 H174.8 M171.9 45.300000000000004 V51.1" stroke="#1f1f1f" stroke-width="1.5" fill="none"/>
<ellipse cx="193.0" cy="39.3" rx="4.4" ry="1.9" fill="none" stroke="#6a6a6a" stroke-width="0.9"/>
<path d="M188.6 39.3 V46.699999999999996 A4.4 1.9 0 0 0 192.56 48.599999999999994" fill="none" stroke="#6a6a6a" stroke-width="0.9"/>
<path d="M197.4 39.3 V43.4" fill="none" stroke="#6a6a6a" stroke-width="0.9"/>
<rect x="194.2" y="46.3" width="1.3" height="5" fill="#1f1f1f"/><rect x="196.8" y="46.3" width="1.3" height="5" fill="#1f1f1f"/>
<path d="M207.6 43 H211.6 L209.6 45.2 Z" fill="#555"/>
<path d="M219.3 41.5 A5.6 5.6 0 0 1 229.6 41.2 M229.9 44.6 A5.6 5.6 0 0 1 219.6 45" fill="none" stroke="#c2c2c2" stroke-width="1"/>
<path d="M230.9 40.4 L230.4 43 L228 41.9 Z M218.3 45.8 L218.8 43.2 L221.2 44.3 Z" fill="#c2c2c2"/>
<path d="M239.3 42.9 H243.3 L241.3 45.1 Z" fill="#c2c2c2"/>
<rect x="251.0" y="30" width="1" height="28" fill="#e0e0e0"/>
<path d="M273.3 45.1 V38.6 Q273.3 37.6 272.3 37.6 H262.3 Q261.3 37.6 261.3 38.6 V48.6 Q261.3 49.6 262.3 49.6 H268.8" fill="none" stroke="#6a6a6a" stroke-width="1"/>
<rect x="263.1" y="44.5" width="1.1" height="2.8" fill="#6a6a6a"/><rect x="266.3" y="40.5" width="1.1" height="6.8" fill="#6a6a6a"/><rect x="269.5" y="42.3" width="1.1" height="5" fill="#6a6a6a"/>
<path d="M269.6 48.3 H275.6 M272.6 45.3 V51.3" stroke="#1f1f1f" stroke-width="1.4" fill="none"/>
<path d="M282.1 43 H286.1 L284.1 45.2 Z" fill="#555"/>
<rect x="299.4" y="36.6" width="8" height="7.8" rx="1" fill="#f4f4f4" stroke="#6a6a6a" stroke-width="0.9"/>
<path d="M294.6 48.2 V42.2 Q294.6 41.6 295.2 41.6 H299.4 M302.3 44.4 V47.6 Q302.3 48.2 301.7 48.2 Z" fill="none" stroke="#6a6a6a" stroke-width="0.9"/>
<path d="M294.6 48.2 H302.3 V44.4" fill="none" stroke="#6a6a6a" stroke-width="0.9"/>
<path d="M302 42.5 V40.2 M303.5 42.5 V38.8 M305 42.5 V40.8 M296.5 46.6 H300.5" fill="none" stroke="#6a6a6a" stroke-width="0.7"/>
<path d="M330.4 45.1 V38.6 Q330.4 37.6 329.4 37.6 H319.4 Q318.4 37.6 318.4 38.6 V48.6 Q318.4 49.6 319.4 49.6 H325.9" fill="none" stroke="#6a6a6a" stroke-width="1"/>
<rect x="320.2" y="44.5" width="1.1" height="2.8" fill="#6a6a6a"/><rect x="323.4" y="40.5" width="1.1" height="6.8" fill="#6a6a6a"/><rect x="326.6" y="42.3" width="1.1" height="2.2" fill="#6a6a6a"/>
<path d="M327.4 46 L332 50.6 M332 46 L327.4 50.6" stroke="#1f1f1f" stroke-width="1.5"/>
<path d="M339.2 43 H343.2 L341.2 45.2 Z" fill="#555"/>
<rect x="351.1" y="30" width="1" height="28" fill="#e0e0e0"/>
<rect x="362.59999999999997" y="38.5" width="2.2" height="2.2" rx="0.4" fill="none" stroke="#c2c2c2" stroke-width="0.8"/>
<rect x="366.59999999999997" y="38.5" width="2.2" height="2.2" rx="0.4" fill="none" stroke="#c2c2c2" stroke-width="0.8"/>
<rect x="370.59999999999997" y="38.5" width="2.2" height="2.2" rx="0.4" fill="none" stroke="#c2c2c2" stroke-width="0.8"/>
<rect x="362.59999999999997" y="42.5" width="2.2" height="2.2" rx="0.4" fill="none" stroke="#c2c2c2" stroke-width="0.8"/>
<rect x="362.59999999999997" y="46.5" width="2.2" height="2.2" rx="0.4" fill="none" stroke="#c2c2c2" stroke-width="0.8"/>
<path d="M367.8 50.2 Q373.4 48.6 374.2 43.2" fill="none" stroke="#c2c2c2" stroke-width="0.9"/>
<path d="M372.6 43.8 L374.6 42 L375.6 44.6 Z M369 49 L366.8 50.6 L369.4 51.6 Z" fill="#c2c2c2"/>
<path d="M389.5 38.3 V48 M387.4 46 L389.5 49 L391.6 46" fill="none" stroke="#c2c2c2" stroke-width="0.9"/>
<rect x="393.5" y="38.6" width="3.3000000000000114" height="2" rx="0.6" fill="none" stroke="#c2c2c2" stroke-width="0.8"/>
<rect x="393.5" y="42.6" width="5.5" height="2" rx="0.6" fill="none" stroke="#c2c2c2" stroke-width="0.8"/>
<rect x="393.5" y="46.6" width="8.0" height="2" rx="0.6" fill="none" stroke="#c2c2c2" stroke-width="0.8"/>
<path d="M414.6 38.3 V48 M412.5 46 L414.6 49 L416.7 46" fill="none" stroke="#c2c2c2" stroke-width="0.9"/>
<rect x="418.5" y="38.6" width="8.100000000000023" height="2" rx="0.6" fill="none" stroke="#c2c2c2" stroke-width="0.8"/>
<rect x="418.5" y="42.6" width="6.100000000000023" height="2" rx="0.6" fill="none" stroke="#c2c2c2" stroke-width="0.8"/>
<rect x="418.5" y="46.6" width="3.3000000000000114" height="2" rx="0.6" fill="none" stroke="#c2c2c2" stroke-width="0.8"/>
<rect x="438.1" y="30" width="1" height="28" fill="#e0e0e0"/>
<path d="M453.3 47.3 L458.2 38.6 Q458.9 37.6 459.9 38.2 Q460.8 38.8 460.3 39.8 L455.4 48.4 L453.2 49 Z" fill="none" stroke="#555" stroke-width="0.9"/>
<rect x="451.8" y="49.6" width="9" height="1.4" fill="#555"/>
<path d="M468.3 43 H472.3 L470.3 45.2 Z" fill="#555"/>
<path d="M485.4 47.8 L490 40.6 Q491.1 38.4 489.4 37.4 Q487.7 36.5 486.5 38.5 L481.7 45.8 Q480.6 47.9 482.3 48.8 Q484 49.6 485.2 47.6 L488.9 41.8 Q489.4 40.8 488.6 40.4 Q487.9 40 487.3 41 L483.6 46.8" fill="none" stroke="#c2c2c2" stroke-width="0.9"/>
<path d="M499.8 42.8 H503.8 L501.8 45.0 Z" fill="#c2c2c2"/>
<rect x="512.9" y="37.6" width="12.6" height="11" fill="none" stroke="#c2c2c2" stroke-width="0.9" stroke-dasharray="1 1"/>
<path d="M516.6 39.9 H521.8 M519.2 39.9 V46.3 M518 46.3 H520.4" fill="none" stroke="#c2c2c2" stroke-width="0.9"/>
<path d="M543.6 37.6 L547.6 41.4 L545.6 42.1 L543.6 45.6 L543.8 47.2 L538.6 42 L540.2 42.2 L543.6 40.1 Z M541 44.5 L538.3 49" fill="none" stroke="#c2c2c2" stroke-width="0.9"/>
<rect x="564.6" y="34.9" width="81.6" height="16.8" rx="1.5" fill="#f4f4f4" stroke="#dadada" stroke-width="1"/>
<path d="M636.8 42 H641.8 L639.3 44.8 Z" fill="#c2c2c2"/>
<rect x="658.1" y="30" width="1" height="28" fill="#e0e0e0"/>
<rect x="669.2" y="38.6" width="3.6" height="2.2" rx="1" fill="none" stroke="#6a6a6a" stroke-width="0.9"/>
<rect x="669.2" y="42.4" width="3.6" height="2.2" rx="1" fill="none" stroke="#6a6a6a" stroke-width="0.9"/>
<rect x="669.2" y="46.4" width="3.6" height="2.2" rx="1" fill="none" stroke="#6a6a6a" stroke-width="0.9"/>
<rect x="674.4" y="38.5" width="10" height="10" rx="0.8" fill="none" stroke="#6a6a6a" stroke-width="1"/>
<rect x="676.2" y="45" width="1" height="2.5" fill="#555"/><rect x="678.4" y="41.5" width="1" height="6" fill="#555"/><rect x="680.8" y="43" width="1" height="4.5" fill="#555"/>
<path d="M688.4 43 H692.4 L690.4 45.2 Z" fill="#555"/>
<rect x="701.2" y="38" width="13.6" height="1.4" fill="#6a6a6a"/>
<path d="M702.7 39.4 V45.6 H713.3 V39.4 M708 45.6 V49.4 M705.2 49.6 H710.9" fill="none" stroke="#6a6a6a" stroke-width="1"/>
<rect x="726.4" y="30" width="1" height="28" fill="#e0e0e0"/>
<path d="M743.3 42.4 L746.2 40.3 M743.3 44.4 L746.2 46.6" stroke="#444" stroke-width="1"/>
<circle cx="747.9" cy="39.3" r="2" fill="none" stroke="#444" stroke-width="1"/>
<circle cx="741.6" cy="43.4" r="2" fill="none" stroke="#444" stroke-width="1"/>
<circle cx="747.9" cy="47.6" r="2" fill="none" stroke="#444" stroke-width="1"/>
<circle cx="1398.5" cy="44.3" r="6.6" fill="none" stroke="#c6c6c6" stroke-width="1"/>
<path d="M1393.2 36.8 L1395 38.8 M1403.8 36.8 L1402 38.8 M1394.6 42.4 Q1398.5 37.4 1402.2 42.2" fill="none" stroke="#c6c6c6" stroke-width="0.9"/>
<path d="M1394.5 45.4 H1402.5" stroke="#c6c6c6" stroke-width="1"/><circle cx="1396.5" cy="45.4" r="1" fill="#c6c6c6"/><circle cx="1400.5" cy="45.4" r="1" fill="#c6c6c6"/>
<path d="M1393.5 48.5 Q1398.5 51 1403.5 48.5" fill="none" stroke="#d0d0d0" stroke-width="1"/>
<path d="M1417.2 38.7 H1428.5 L1430.6 41.2 L1428.5 43.7 H1417.2 Z" fill="#fff" stroke="#6a6a6a" stroke-width="1"/>
<path d="M1423.5 36.3 V38.7 M1423.5 43.7 V50.4 M1421.3 50.6 H1425.7" fill="none" stroke="#6a6a6a" stroke-width="1"/>
</svg>
</body></html>
